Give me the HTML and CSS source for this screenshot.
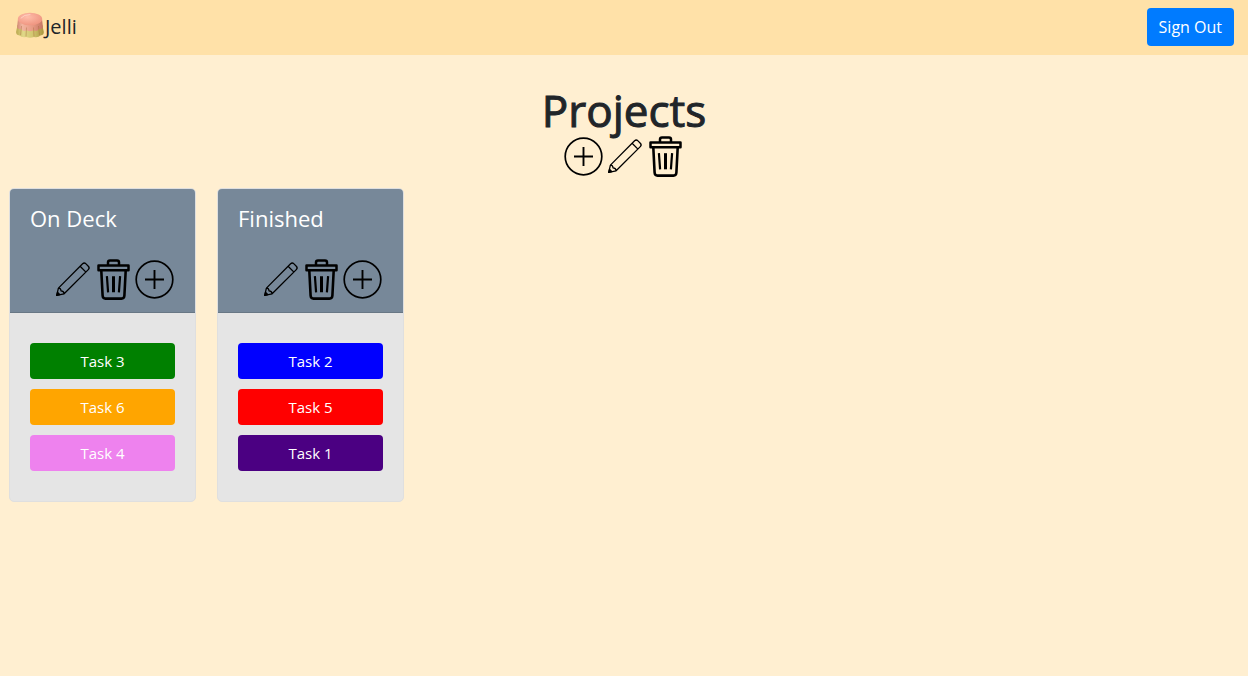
FILE: index.html
```html
<!DOCTYPE html>
<html lang="en">
<head>
<meta charset="utf-8">
<meta name="viewport" content="width=device-width, initial-scale=1">
<title>Jelli</title>
<link rel="stylesheet" href="styles.css">
</head>
<body>
<svg class="sprite" aria-hidden="true">
  <defs>
    <symbol id="plus" viewBox="0 0 41 41"><g fill="none" stroke="#000"><circle cx="20.5" cy="20.5" r="18.3" stroke-width="1.7"/><path d="M20.5 11v19M11 20.5h19" stroke-width="1.9"/></g></symbol>
    <symbol id="pencil" viewBox="0 0 41 41"><g fill="none" stroke="#000" stroke-width="1.3" stroke-linejoin="round"><path d="M4.700 36.400 6.400 29.100 30.600 4.700Q32.300 3.200 34 4.900L36.300 7.200Q38 8.900 36.300 10.600L12.100 34.800ZM6.400 29.100Q8.800 29 9.100 31.900 12 32.200 12.100 34.800M28.100 7.300 33.700 12.900"/><path d="M4.700 36.400 5.500 33.300 7.800 35.600Z" fill="#000"/></g></symbol>
    <symbol id="trash" viewBox="0 0 41 41"><g fill="none" stroke="#000" stroke-linejoin="round"><path d="M5.500 6.500h30v4.700h-30zM15 6V3.500Q15 1.500 17 1.500h7Q26 1.500 26 3.500V6" stroke-width="2.500"/><path d="M8.300 11.500 9.600 36.500Q9.800 39.600 12.500 39.600h16Q31.200 39.600 31.400 36.500L32.700 11.500" stroke-width="2.600"/><path d="M13.900 17.200 15.100 33.300M27.100 17.200 25.900 33.300" stroke-width="2.200"/><path d="M20.500 17.200v16.100" stroke-width="3"/></g></symbol>
    <linearGradient id="cream" x2="1" y2="0"><stop stop-color="#b9a84e"/><stop offset=".25" stop-color="#e0d888"/><stop offset=".6" stop-color="#d2c670"/><stop offset="1" stop-color="#a8963f"/></linearGradient>
    <linearGradient id="pink" x2="1" y2="0"><stop stop-color="#d08872"/><stop offset=".2" stop-color="#f2b5a0"/><stop offset=".6" stop-color="#e89a84"/><stop offset="1" stop-color="#c47562"/></linearGradient>
    <radialGradient id="glaze" cx=".4" cy=".35" r=".7"><stop stop-color="#ffbdaa"/><stop offset="1" stop-color="#ee937e"/></radialGradient>
  </defs>
</svg>

<nav class="navbar">
  <a class="brand" href="#">
    <svg class="brand-logo" viewBox="0 0 30 30" aria-hidden="true">
      <path d="M2.500 13 1.100 20Q1 23 4.500 23.500 7 26 11 25 15 26.500 19 25 23 26 25.500 23.500 29 23 28.800 20L27.300 13Z" fill="url(#cream)"/>
      <path d="M3 7 2 15.500Q3.500 18 6 17 8.500 20 11.500 18.200 15 20.500 18.500 18.200 22 20 24.200 17 27 18 28 15.500L27 7Z" fill="url(#pink)"/>
      <path d="M6.500 14 5.600 23M11.500 15.500 11 24.500M18.500 15.500 19 24.500M23.500 14 24.500 23" fill="none" stroke="#a86d3f" stroke-opacity=".45"/>
      <ellipse cx="15" cy="7" rx="12.200" ry="6.300" fill="url(#glaze)"/>
      <path d="M6 6Q9 2.500 15 2.500" fill="none" stroke="#ffe3da" stroke-opacity=".6" stroke-linecap="round"/>
    </svg>
    <span>Jelli</span>
  </a>
  <button class="sign-out" type="button">Sign Out</button>
</nav>

<main>
  <header class="project">
    <h1 class="project-title">Projects</h1>
    <div class="actions">
      <button class="icon-button" type="button" aria-label="Add list"><svg class="icon"><use href="#plus"/></svg></button>
      <button class="icon-button" type="button" aria-label="Edit project"><svg class="icon"><use href="#pencil"/></svg></button>
      <button class="icon-button" type="button" aria-label="Delete project"><svg class="icon"><use href="#trash"/></svg></button>
    </div>
  </header>

  <div class="board">
    <section class="card">
      <header class="card-header">
        <h2 class="card-title">On Deck</h2>
        <div class="actions card-actions">
          <button class="icon-button" type="button" aria-label="Edit On Deck"><svg class="icon"><use href="#pencil"/></svg></button>
          <button class="icon-button" type="button" aria-label="Delete On Deck"><svg class="icon"><use href="#trash"/></svg></button>
          <button class="icon-button" type="button" aria-label="Add task to On Deck"><svg class="icon"><use href="#plus"/></svg></button>
        </div>
      </header>
      <div class="tasks">
        <button class="task green" type="button">Task 3</button>
        <button class="task orange" type="button">Task 6</button>
        <button class="task violet" type="button">Task 4</button>
      </div>
    </section>
    <section class="card">
      <header class="card-header">
        <h2 class="card-title">Finished</h2>
        <div class="actions card-actions">
          <button class="icon-button" type="button" aria-label="Edit Finished"><svg class="icon"><use href="#pencil"/></svg></button>
          <button class="icon-button" type="button" aria-label="Delete Finished"><svg class="icon"><use href="#trash"/></svg></button>
          <button class="icon-button" type="button" aria-label="Add task to Finished"><svg class="icon"><use href="#plus"/></svg></button>
        </div>
      </header>
      <div class="tasks">
        <button class="task blue" type="button">Task 2</button>
        <button class="task red" type="button">Task 5</button>
        <button class="task indigo" type="button">Task 1</button>
      </div>
    </section>
  </div>
</main>
</body>
</html>
```

FILE: styles.css
```css
* {
  box-sizing: border-box;
}

body {
  margin: 0;
  background: #ffefd1;
  color: #212529;
  font: 16px/24px "Segoe UI", "Open Sans", "Noto Sans", sans-serif;
}

button {
  border: 0;
  font: inherit;
  cursor: pointer;
}

.sprite {
  position: absolute;
  width: 0;
  height: 0;
}

.navbar {
  display: flex;
  align-items: center;
  justify-content: space-between;
  padding: 8px 14px 9px 15px;
  background: #ffe1a8;
}

.brand {
  display: flex;
  align-items: center;
  color: #212529;
  font-size: 20px;
  line-height: 38px;
  text-decoration: none;
}

.brand-logo {
  width: 30px;
  height: 30px;
}

.sign-out {
  padding: 7px 12px;
  border-radius: 4px;
  background: #007bff;
  color: #fff;
}

.project {
  display: flex;
  flex-direction: column;
  align-items: center;
  padding-top: 29px;
}

.project-title {
  margin: 0;
  font-size: 44px;
  font-weight: 500;
  line-height: 52px;
  -webkit-text-stroke: 1px currentColor;
}

.actions {
  display: flex;
}

.icon-button {
  padding: 0;
  background: none;
}

.icon {
  display: block;
  width: 41px;
  height: 41px;
}

.board {
  display: grid;
  grid-template-columns: repeat(6, 1fr);
  gap: 21px;
  padding: 11px 12px 20px 9px;
}

.card {
  overflow: hidden;
  border: 1px solid #dfdfdf;
  border-radius: 5px;
  background: #e5e5e5;
}

.card-header {
  padding: 12px 20px;
  border-bottom: 1px solid #687785;
  background: #778899;
}

.card-title {
  margin: 0;
  color: #fff;
  font-size: 22px;
  font-weight: 400;
  line-height: 34px;
}

.card-actions {
  justify-content: flex-end;
  padding-top: 24px;
}

.tasks {
  display: flex;
  flex-direction: column;
  gap: 10px;
  padding: 30px 20px;
}

.task {
  padding: 6px 12px;
  border-radius: 4px;
  color: #fff;
  font-size: 15px;
}

.green { background: #008000; }
.orange { background: #ffa500; }
.violet { background: #ee82ee; }
.blue { background: #0000ff; }
.red { background: #ff0000; }
.indigo { background: #4b0082; }
```
